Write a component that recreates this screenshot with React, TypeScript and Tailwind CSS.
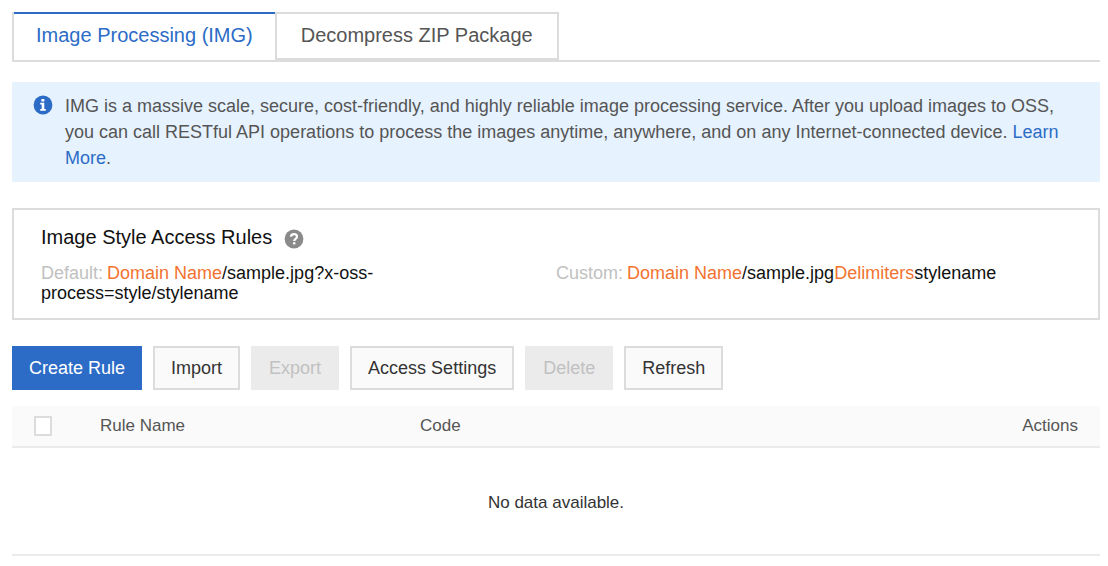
import type { ReactNode } from "react";

function InfoIcon() {
  return (
    <svg viewBox="0 0 20 20" className="mt-[13px] size-5 shrink-0" aria-hidden="true">
      <circle cx="10" cy="10" r="9.4" fill="#2c6cc7" />
      <path d="M8.4 4h2.900v2.500H8.400zM7.200 7.800h4.100v6.200h1.500v1.700H7.200V14h1.500V9.500H7.200z" fill="#fff" />
    </svg>
  );
}

function HelpIcon() {
  return (
    <svg viewBox="0 0 20 20" className="mt-1 size-5 shrink-0" aria-hidden="true">
      <circle cx="10" cy="10" r="9.4" fill="#8a8a8a" />
      <path
        d="M7 7.800C7 6 8.300 5.200 10 5.200s3 .9 3 2.500c0 2.200-2.800 2.100-2.800 4.200"
        fill="none"
        stroke="#fff"
        strokeWidth="2.200"
      />
      <rect x="9" y="13.200" width="2.400" height="2.200" fill="#fff" />
    </svg>
  );
}

function ToolButton({ children, disabled = false }: { children: ReactNode; disabled?: boolean }) {
  return (
    <button
      type="button"
      disabled={disabled}
      className="h-11 border-2 border-[#dcdcdc] bg-[#fafafa] px-4 text-[#333] disabled:border-[#ebebeb] disabled:bg-[#ebebeb] disabled:text-[#c1c1c1]"
    >
      {children}
    </button>
  );
}

function Accent({ children }: { children: ReactNode }) {
  return <span className="text-[#f27330]">{children}</span>;
}

export default function App() {
  return (
    <main className="bg-white py-3 pl-3 pr-2 font-['Liberation_Sans',Arial,sans-serif] text-[17px] text-[#555]">
      <div role="tablist" className="flex h-[50px] border-b-2 border-[#dcdcdc] text-xl">
        <button
          type="button"
          role="tab"
          aria-selected="true"
          className="border-l-2 border-[#dcdcdc] text-[#2c6cc7]"
        >
          <span className="flex h-full border-t-2 border-[#2c6cc7] px-[22px] pt-[7px]">
            Image Processing (IMG)
          </span>
        </button>
        <button
          type="button"
          role="tab"
          aria-selected="false"
          className="flex border-2 border-[#dcdcdc] px-6 pt-[7px]"
        >
          Decompress ZIP Package
        </button>
      </div>

      <section className="mt-5 flex gap-3 bg-[#e6f2fe] pb-[11px] pl-[21px] pr-5 text-lg leading-[26px]">
        <InfoIcon />
        <p className="pt-[11px]">
          IMG is a massive scale, secure, cost-friendly, and highly reliable image processing
          service. After you upload images to OSS, you can call RESTful API operations to process
          the images anytime, anywhere, and on any Internet-connected device.{" "}
          <a href="#learn-more" className="text-[#2c6cc7]">
            Learn More
          </a>
          .
        </p>
      </section>

      <section className="mt-[26px] border-2 border-[#dcdcdc] px-[27px] pb-[15px] pt-[13px] text-[#111]">
        <div className="flex items-center gap-3">
          <h2 className="text-xl">Image Style Access Rules</h2>
          <HelpIcon />
        </div>
        <div className="mt-3 grid grid-cols-2 text-lg leading-5">
          <p className="max-w-[350px]">
            <span className="mr-1 text-[#c1c1c1]">Default:</span>
            <Accent>Domain Name</Accent>/sample.jpg?x-oss-process=style/stylename
          </p>
          <p>
            <span className="mr-1 text-[#c1c1c1]">Custom:</span>
            <Accent>Domain Name</Accent>/sample.jpg<Accent>Delimiters</Accent>stylename
          </p>
        </div>
      </section>

      <div className="mt-[26px] flex flex-wrap gap-[11px] text-lg">
        <button type="button" className="h-11 bg-[#2c6cc7] px-[17px] text-white">
          Create Rule
        </button>
        <ToolButton>Import</ToolButton>
        <ToolButton disabled>Export</ToolButton>
        <ToolButton>Access Settings</ToolButton>
        <ToolButton disabled>Delete</ToolButton>
        <ToolButton>Refresh</ToolButton>
      </div>

      <table className="mt-4 w-full table-fixed border-collapse">
        <thead>
          <tr className="h-[41px] border-b-2 border-[#ebebeb] bg-[#fafafa] text-left">
            <th className="w-[88px] pl-[22px]">
              <input
                type="checkbox"
                aria-label="Select all rules"
                className="block h-5 w-[18px] appearance-none border-2 border-[#dcdcdc] bg-white"
              />
            </th>
            <th className="w-80 font-normal">Rule Name</th>
            <th className="font-normal">Code</th>
            <th className="pr-[22px] text-right font-normal">Actions</th>
          </tr>
        </thead>
        <tbody>
          <tr className="h-[108px] border-b-2 border-[#ebebeb] text-center text-[#333]">
            <td colSpan={4} className="pt-1">
              No data available.
            </td>
          </tr>
        </tbody>
      </table>
    </main>
  );
}
